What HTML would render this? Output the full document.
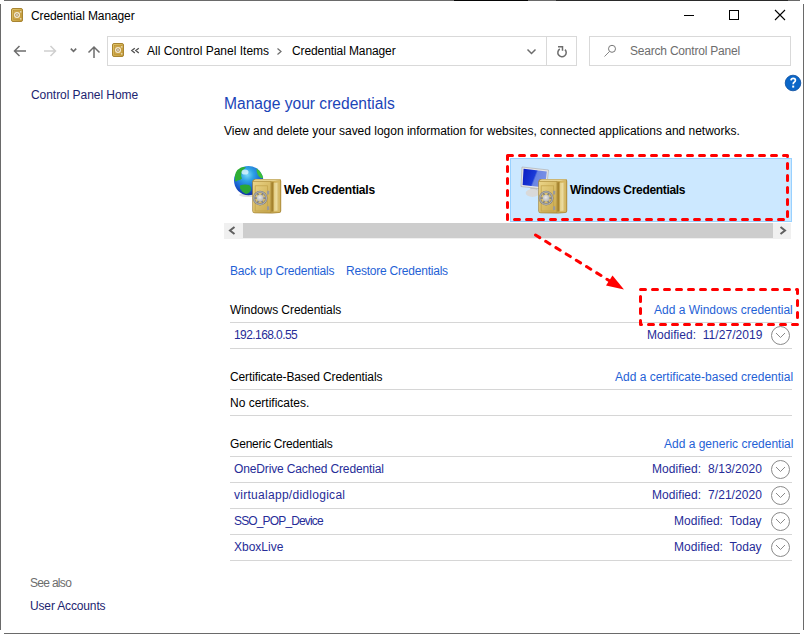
<!DOCTYPE html>
<html><head><meta charset="utf-8">
<style>
html,body{margin:0;padding:0;background:#fff;}
body{width:804px;height:634px;position:relative;overflow:hidden;font-family:"Liberation Sans",sans-serif;font-size:12px;color:#000;}
.a{position:absolute;}
.t{position:absolute;white-space:nowrap;line-height:14px;font-size:12px;}
.nav{color:#1c2470;}
.lnk{color:#1f62d6;}
.itm{color:#262c98;}
.sep{position:absolute;left:230px;width:562px;height:1px;background:#d6d6d6;}
.bold{font-weight:bold;}
svg{position:absolute;left:0;top:0;}
</style></head><body>
<!-- window border -->
<div class="a" style="left:4px;top:0;width:796px;height:1px;background:#6a6a6a"></div>
<div class="a" style="left:454px;top:0;width:74px;height:1px;background:#050505"></div>
<div class="a" style="left:556px;top:0;width:232px;height:1px;background:#2a2a2a"></div>
<div class="a" style="left:0;top:4px;width:1px;height:626px;background:#6a6a6a"></div>
<div class="a" style="left:803px;top:4px;width:1px;height:626px;background:#6a6a6a"></div>
<div class="a" style="left:4px;top:633px;width:796px;height:1px;background:#6a6a6a"></div>

<!-- title -->
<div class="t" style="left:31px;top:9px;letter-spacing:-0.1px">Credential Manager</div>

<!-- address bar -->
<div class="a" style="left:107px;top:36px;width:468px;height:28px;border:1px solid #d9d9d9"></div>
<div class="a" style="left:546px;top:37px;width:1px;height:28px;background:#d9d9d9"></div>
<div class="a" style="left:589px;top:36px;width:200px;height:28px;border:1px solid #d9d9d9"></div>
<div class="t" style="left:147px;top:44px;">All Control Panel Items</div>
<div class="t" style="left:292px;top:44px;letter-spacing:-0.1px">Credential Manager</div>
<div class="t" style="left:630px;top:44px;color:#6d6d6d;letter-spacing:-0.21px">Search Control Panel</div>

<!-- left pane -->
<div class="t nav" style="left:31px;top:88px;letter-spacing:-0.05px">Control Panel Home</div>
<div class="t" style="left:30px;top:576px;color:#6d6d6d;letter-spacing:-0.7px">See also</div>
<div class="t nav" style="left:30px;top:599px;letter-spacing:-0.15px">User Accounts</div>

<!-- main -->
<div class="t" style="left:224px;top:95px;font-size:15.6px;line-height:18px;color:#1a44b8">Manage your credentials</div>
<div class="t" style="left:224px;top:124px;letter-spacing:-0.01px">View and delete your saved logon information for websites, connected applications and networks.</div>

<div class="t bold" style="left:284px;top:183px;letter-spacing:-0.19px">Web Credentials</div>
<div class="a" style="left:510px;top:158px;width:280px;height:62px;background:#cce8ff;border:1px solid #99d1ff"></div>
<div class="t bold" style="left:570px;top:183px;letter-spacing:-0.32px">Windows Credentials</div>

<!-- scrollbar -->
<div class="a" style="left:224px;top:223px;width:567px;height:16px;background:#f0f0f0"></div>
<div class="a" style="left:243px;top:223px;width:530px;height:15px;background:#cdcdcd"></div>

<div class="t lnk" style="left:230px;top:264px;letter-spacing:-0.16px">Back up Credentials</div>
<div class="t lnk" style="left:346px;top:264px;letter-spacing:-0.22px">Restore Credentials</div>

<div class="t" style="left:230px;top:303px;letter-spacing:-0.08px">Windows Credentials</div>
<div class="t lnk" style="left:654px;top:303px;">Add a Windows credential</div>
<div class="sep" style="top:322px"></div>
<div class="t itm" style="left:234px;top:328px;letter-spacing:-0.58px">192.168.0.55</div>
<div class="t itm" style="left:647px;top:328px;letter-spacing:0.04px">Modified:&nbsp; 11/27/2019</div>
<div class="sep" style="top:348px"></div>

<div class="t" style="left:230px;top:370px;letter-spacing:-0.13px">Certificate-Based Credentials</div>
<div class="t lnk" style="left:615px;top:370px;">Add a certificate-based credential</div>
<div class="sep" style="top:389px"></div>
<div class="t" style="left:230px;top:396px;">No certificates.</div>
<div class="sep" style="top:415px"></div>

<div class="t" style="left:230px;top:437px;letter-spacing:-0.19px">Generic Credentials</div>
<div class="t lnk" style="left:664px;top:437px;">Add a generic credential</div>
<div class="sep" style="top:456px"></div>
<div class="t itm" style="left:234px;top:462px;letter-spacing:-0.14px">OneDrive Cached Credential</div>
<div class="t itm" style="left:652px;top:462px;letter-spacing:0.06px">Modified:&nbsp; 8/13/2020</div>
<div class="sep" style="top:482px"></div>
<div class="t itm" style="left:234px;top:488px;letter-spacing:0.28px">virtualapp/didlogical</div>
<div class="t itm" style="left:652px;top:488px;letter-spacing:0.06px">Modified:&nbsp; 7/21/2020</div>
<div class="sep" style="top:508px"></div>
<div class="t itm" style="left:234px;top:514px;letter-spacing:-0.85px">SSO_POP_Device</div>
<div class="t itm" style="left:674px;top:514px;letter-spacing:0.03px">Modified:&nbsp; Today</div>
<div class="sep" style="top:534px"></div>
<div class="t itm" style="left:234px;top:540px;">XboxLive</div>
<div class="t itm" style="left:674px;top:540px;letter-spacing:0.03px">Modified:&nbsp; Today</div>
<div class="sep" style="top:560px"></div>

<svg width="804" height="634" viewBox="0 0 804 634">
<defs>
 <linearGradient id="gFront" x1="0" y1="0" x2="1" y2="1">
  <stop offset="0" stop-color="#ead488"/><stop offset="0.5" stop-color="#d9bd68"/><stop offset="1" stop-color="#c8a84e"/>
 </linearGradient>
 <linearGradient id="gSide" x1="0" y1="0" x2="1" y2="0">
  <stop offset="0" stop-color="#e2cc80"/><stop offset="0.5" stop-color="#ecdca0"/><stop offset="1" stop-color="#d0b460"/>
 </linearGradient>
 <linearGradient id="gTop" x1="0" y1="0" x2="0" y2="1">
  <stop offset="0" stop-color="#f2e6b0"/><stop offset="1" stop-color="#dcc070"/>
 </linearGradient>
 <radialGradient id="gOcean" cx="0.45" cy="0.3" r="0.72">
  <stop offset="0" stop-color="#7ad8f8"/><stop offset="0.3" stop-color="#2ea2e6"/><stop offset="0.7" stop-color="#1a5fd0"/><stop offset="1" stop-color="#0b2aa0"/>
 </radialGradient>
 <linearGradient id="gScreen" x1="0" y1="0" x2="1" y2="0.3">
  <stop offset="0" stop-color="#0a1cc0"/><stop offset="0.55" stop-color="#1a3ad8"/><stop offset="0.62" stop-color="#6a84e2"/><stop offset="1" stop-color="#7890e6"/>
 </linearGradient>
 <radialGradient id="gHub" cx="0.45" cy="0.4" r="0.6">
  <stop offset="0" stop-color="#e8e8e8"/><stop offset="1" stop-color="#b4b4b4"/>
 </radialGradient>
 <linearGradient id="gSmall" x1="0" y1="0" x2="1" y2="1">
  <stop offset="0" stop-color="#e2c66a"/><stop offset="1" stop-color="#c29a36"/>
 </linearGradient>
 <g id="safe">
  <path d="M0.3,3.5 Q0.5,1.2 3,0.9 L27.5,0.9 Q29.2,1 29.2,3 L29.2,33 Q29,34.8 27,35 L20,35.4 L2.5,35.2 Q0.3,35 0.3,33 Z" fill="#a88838"/>
  <path d="M1.2,3.2 Q2,1.6 4,1.6 L27.5,1.6 Q28.4,1.8 28.2,2.4 L19,3.3 Z" fill="url(#gTop)"/>
  <path d="M1,3.8 L18.6,3.8 L18.6,34.4 L2.2,34.4 Q1,34.3 1,33 Z" fill="url(#gFront)"/>
  <path d="M19.2,3.4 L28.3,2.6 L28.3,33 Q28.2,34 27,34.2 L19.2,34.6 Z" fill="#d6b862"/>
  <path d="M19.2,4.3 L21.6,4.1 L21.6,33.4 L19.2,33.8 Z" fill="#a4822e"/>
  <path d="M21.8,5 L27,4.4 L27,32.4 L21.8,33 Z" fill="url(#gSide)"/>
  <rect x="3.2" y="7.8" width="12.4" height="25.2" fill="none" stroke="#c4a44c" stroke-width="0.8"/>
  <rect x="15" y="12.8" width="2.2" height="3.8" rx="0.5" fill="#9a9a9a"/>
  <rect x="15" y="28.3" width="2.2" height="3.8" rx="0.5" fill="#9a9a9a"/>
  <g stroke="#858585" stroke-width="1.7">
   <path d="M2.2,20.1 H14 M5.1,14.9 L11.1,25.3 M11.1,14.9 L5.1,25.3"/>
  </g>
  <circle cx="8.1" cy="20.1" r="6.3" fill="none" stroke="#7e7e7e" stroke-width="2.1"/>
  <circle cx="8.1" cy="20.1" r="6.3" fill="none" stroke="#d4d4d4" stroke-width="0.7"/>
  <circle cx="8.1" cy="20.1" r="3.4" fill="url(#gHub)"/>
 </g>
 <g id="sicon">
  <rect x="0.5" y="0.5" width="11" height="13" rx="1.5" fill="url(#gSmall)" stroke="#a88432" stroke-width="1"/>
  <rect x="2.5" y="2.5" width="7.5" height="9" fill="#cda548" stroke="#b89038" stroke-width="0.6"/>
  <circle cx="6" cy="7" r="2.4" fill="#b08a3a" stroke="#f2ead2" stroke-width="1.2"/>
  <circle cx="6" cy="7" r="0.9" fill="#d8dcea"/>
  <rect x="9.3" y="3" width="1" height="1.6" fill="#f0ecd8"/>
  <rect x="9.3" y="10" width="1" height="1.6" fill="#f0ecd8"/>
 </g>
</defs>
<!-- title icons -->
<use href="#sicon" x="11" y="8"/>
<use href="#sicon" x="112" y="43"/>
<!-- min max close -->
<rect x="684" y="15" width="10" height="1" fill="#000"/>
<rect x="729.5" y="10.5" width="9" height="9" fill="none" stroke="#000" stroke-width="1"/>
<path d="M775,10 L785,20 M785,10 L775,20" stroke="#000" stroke-width="1.1"/>
<!-- nav arrows -->
<path d="M14.5,51 H26 M19.5,46 L14.5,51 L19.5,56" fill="none" stroke="#6d6d6d" stroke-width="1.5"/>
<path d="M44,51 H55.5 M50.5,46 L55.5,51 L50.5,56" fill="none" stroke="#cfcfcf" stroke-width="1.5"/>
<path d="M70.8,48.6 L73.5,51.3 L76.2,48.6" fill="none" stroke="#6d6d6d" stroke-width="1.6"/>
<path d="M94,47 V58 M88.5,52.5 L94,47 L99.5,52.5" fill="none" stroke="#6d6d6d" stroke-width="1.5"/>
<!-- breadcrumb glyphs -->
<path d="M134.8,48.2 L131.8,50.6 L134.8,53 M138.8,48.2 L135.8,50.6 L138.8,53" fill="none" stroke="#505050" stroke-width="1.3"/>
<path d="M277.5,48.5 L281,51.5 L277.5,54.5" fill="none" stroke="#6d6d6d" stroke-width="1.2"/>
<path d="M527.5,49.5 L531.5,53.5 L535.5,49.5" fill="none" stroke="#6d6d6d" stroke-width="1.5"/>
<!-- refresh -->
<path d="M565,49.6 A4.2,4.2 0 1 1 559.8,49" fill="none" stroke="#6d6d6d" stroke-width="1.5"/>
<path d="M558,46.8 H562.5 V50.8" fill="none" stroke="#6d6d6d" stroke-width="1.5"/>
<!-- search icon -->
<circle cx="612" cy="48.8" r="3.5" fill="none" stroke="#777" stroke-width="1"/>
<path d="M609.5,51.5 L604.5,56.5" stroke="#888" stroke-width="1"/>
<!-- help -->
<circle cx="793" cy="83" r="7.8" fill="#0a66c8" stroke="#0a4c9e" stroke-width="0.8"/>
<path d="M791,80.4 Q791.2,78.3 793.2,78.3 Q795.4,78.3 795.4,80.3 Q795.4,81.6 794.1,82.3 Q793.2,82.8 793.2,84.2" fill="none" stroke="#fff" stroke-width="1.7"/><rect x="792.2" y="85.6" width="2" height="2" fill="#fff"/>
<!-- globe -->
<ellipse cx="249" cy="195" rx="10" ry="2" fill="#000" opacity="0.12"/>
<circle cx="248.6" cy="180.6" r="14.6" fill="url(#gOcean)"/>
<path d="M241,167.4 Q244.5,166.4 246,167.6 Q243,169.5 241.5,172.5 Q240.5,176 242,178.5 Q240,180.5 237.5,180.5 Q236,182 235,181 Q234.3,176 235.8,172.5 Q237.5,169 241,167.4 Z" fill="#2fae34"/>
<path d="M256.5,168.5 Q261.5,171.5 263.2,178 Q260.5,179 259,176.5 Q256.5,174 256.5,168.5 Z" fill="#3cc038"/>
<path d="M240,185.5 Q244.5,183.8 249,185 Q251.5,186.5 251,190 Q249.5,193.5 246,194 Q242,192.5 240,188.5 Z" fill="#2aa636"/>
<ellipse cx="245" cy="172" rx="3.5" ry="2.6" fill="#e8fbff" opacity="0.75"/>
<!-- monitor -->
<path d="M530,186 L537,187 L538,191.5 L530.5,190.5 Z" fill="#c6c6c6"/>
<ellipse cx="532.5" cy="193" rx="6.8" ry="3.9" fill="#d9d9d9"/>
<path d="M522,167 L548.5,170 L546.5,189.5 L521,186.5 Z" fill="#e6e6e6" stroke="#a8a8a8" stroke-width="0.6"/>
<path d="M523.6,168.8 L546.8,171.5 L545,187.6 L522.6,184.9 Z" fill="url(#gScreen)"/>
<!-- safes -->
<use href="#safe" x="252" y="178"/>
<use href="#safe" x="538" y="178"/>
<!-- scrollbar arrows -->
<path d="M234.5,227 L230,230.5 L234.5,234" fill="none" stroke="#606060" stroke-width="2"/>
<path d="M780.5,227 L785,230.5 L780.5,234" fill="none" stroke="#606060" stroke-width="2"/>
<!-- expand circles -->
<g fill="none" stroke="#8a8a8a" stroke-width="1">
 <circle cx="780.5" cy="335.5" r="9"/><path d="M776,333 L780.5,337.5 L785,333"/>
 <circle cx="780.5" cy="469.5" r="9"/><path d="M776,467 L780.5,471.5 L785,467"/>
 <circle cx="780.5" cy="495.5" r="9"/><path d="M776,493 L780.5,497.5 L785,493"/>
 <circle cx="780.5" cy="521.5" r="9"/><path d="M776,519 L780.5,523.5 L785,519"/>
 <circle cx="780.5" cy="547.5" r="9"/><path d="M776,545 L780.5,549.5 L785,545"/>
</g>
<!-- annotations -->
<g fill="none" stroke="#ff0000" stroke-width="3" stroke-dasharray="5 7" stroke-linecap="round" stroke-linejoin="round">
 <rect x="507.5" y="155.5" width="280" height="64"/>
 <rect x="640.5" y="289.5" width="157" height="35"/>
 <path d="M535.5,235 L609,280.5"/>
</g>
<path d="M624,289.5 L606,285.5 L612.5,275.5 Z" fill="#ff0000"/>
</svg>
</body></html>
